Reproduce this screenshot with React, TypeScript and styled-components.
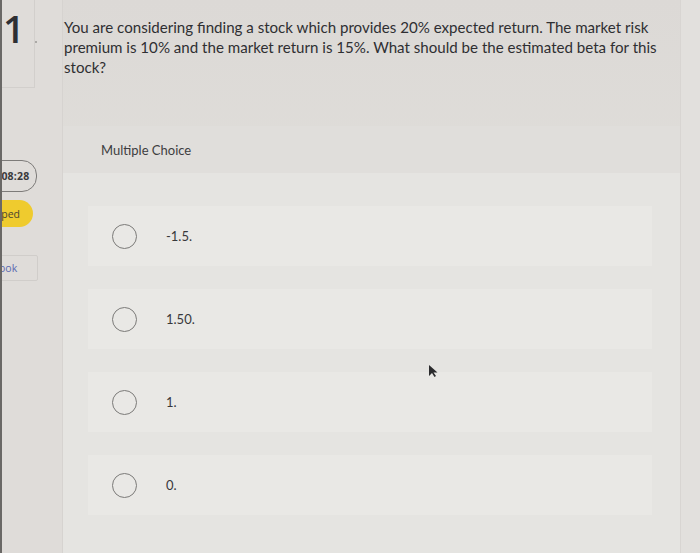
import React from "react";
import styled, { createGlobalStyle } from "styled-components";

const Global = createGlobalStyle`
  html, body { margin: 0; padding: 0; }
  body {
    width: 700px;
    height: 553px;
    overflow: hidden;
    background: #dedbd8;
    font-family: "Lato", "Open Sans", sans-serif;
  }
`;

const Page = styled.div`
  display: flex;
  width: 700px;
  height: 553px;
  background: linear-gradient(180deg, #dcd9d6 0%, #e0deda 40%, #e4e2df 100%);
  border-left: 2px solid #6a6866;
  box-sizing: border-box;
  overflow: hidden;
`;

const Sidebar = styled.div`
  width: 60px;
  flex: none;
  display: flex;
  flex-direction: column;
  align-items: flex-start;
  border-right: 1px solid #d6d3d0;
  background: #dfdcd9;
  overflow: hidden;
`;

const NumberBox = styled.div`
  width: 33px;
  height: 88px;
  box-sizing: border-box;
  border-right: 1px solid #d2cfcc;
  border-bottom: 1px solid #d2cfcc;
  display: flex;
  align-items: flex-start;
  padding-top: 9px;
  padding-left: 1px;
  position: relative;
  font-family: "Open Sans", sans-serif;
  font-size: 38px;
  font-weight: 600;
  color: #2e2f33;
  line-height: 1;
`;

const Dot = styled.span`
  position: absolute;
  right: -3px;
  top: 41px;
  width: 2px;
  height: 2px;
  border-radius: 50%;
  background: #9a9895;
`;

const TimerPill = styled.div`
  margin-top: 72px;
  margin-left: -25px;
  height: 32px;
  padding: 0 7px 0 14px;
  box-sizing: border-box;
  border: 1.5px solid #7d7b79;
  border-radius: 0 15px 15px 0;
  display: flex;
  align-items: center;
  font-family: "Open Sans", sans-serif;
  font-size: 10.5px;
  font-weight: 700;
  color: #3a3a3c;
  letter-spacing: 0.2px;
`;

const StatusPill = styled.div`
  margin-top: 8px;
  margin-left: -10px;
  height: 27px;
  width: 41px;
  padding-right: 13px;
  box-sizing: border-box;
  background: #efcb2e;
  border-radius: 0 14px 14px 0;
  display: flex;
  align-items: center;
  justify-content: flex-end;
  font-family: "Open Sans", sans-serif;
  font-size: 10.5px;
  color: #4a4330;
`;

const BookBox = styled.div`
  margin-top: 28px;
  margin-left: -14px;
  width: 50px;
  height: 26px;
  box-sizing: border-box;
  border: 1px solid #d0cdca;
  border-radius: 2px;
  display: flex;
  align-items: center;
  padding-left: 10px;
  font-family: "Open Sans", sans-serif;
  font-size: 10.5px;
  color: #5b6ab0;
  overflow: hidden;
`;

const Main = styled.div`
  flex: 1;
  display: flex;
  flex-direction: column;
  padding-top: 17px;
  min-width: 0;
`;

const Question = styled.p`
  margin: 0 0 0 1px;
  width: 610px;
  font-family: "Lato", sans-serif;
  font-size: 15.1px;
  line-height: 20px;
  color: #2f2f32;
`;

const Panel = styled.section`
  margin-top: 49px;
  width: 618px;
  flex: 1;
  display: flex;
  flex-direction: column;
  background: #e5e4e1;
`;

const PanelHeader = styled.div`
  height: 47px;
  flex: none;
  display: flex;
  align-items: center;
  padding-left: 38px;
  background: #e0dedb;
  font-family: "Lato", sans-serif;
  font-size: 13px;
  color: #3d3d40;
`;

const OptionList = styled.div`
  display: flex;
  flex-direction: column;
  gap: 23px;
  padding: 33px 29px 0 25px;
`;

const OptionCard = styled.label`
  height: 60px;
  display: flex;
  align-items: center;
  padding-left: 24px;
  background: #e9e8e5;
`;

const Radio = styled.span`
  width: 25px;
  height: 25px;
  box-sizing: border-box;
  border: 1.5px solid #7b7a78;
  border-radius: 50%;
  flex: none;
`;

const OptionText = styled.span`
  margin-left: 29px;
  font-family: "Lato", sans-serif;
  font-size: 13px;
  color: #38383b;
`;

const RightStrip = styled.div`
  width: 19px;
  flex: none;
  border-left: 1px solid #d8d5d2;
  background: #e2e0dd;
`;

const Cursor = styled.svg`
  position: absolute;
  left: 428px;
  top: 364px;
`;

const Stage = styled.div`
  position: relative;
`;

const options = ["-1.5.", "1.50.", "1.", "0."];

export default function App() {
  return (
    <Stage>
      <Global />
      <Page>
        <Sidebar>
          <NumberBox>
            1
            <Dot />
          </NumberBox>
          <TimerPill>0:08:28</TimerPill>
          <StatusPill>ped</StatusPill>
          <BookBox>ook</BookBox>
        </Sidebar>
        <Main>
          <Question>
            You are considering finding a stock which provides 20% expected return. The market risk
            premium is 10% and the market return is 15%. What should be the estimated beta for this
            stock?
          </Question>
          <Panel>
            <PanelHeader>Multiple Choice</PanelHeader>
            <OptionList>
              {options.map((o) => (
                <OptionCard key={o}>
                  <Radio />
                  <OptionText>{o}</OptionText>
                </OptionCard>
              ))}
            </OptionList>
          </Panel>
        </Main>
        <RightStrip />
      </Page>
      <Cursor width="12" height="14" viewBox="0 0 12 14">
        <path d="M1 1 L1 12 L4 9 L6.5 13 L8 12 L5.5 8.5 L9.5 8.5 Z" fill="#2b2b2d" />
      </Cursor>
    </Stage>
  );
}
